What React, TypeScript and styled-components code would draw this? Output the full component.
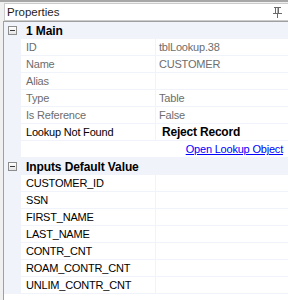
import React, { FC } from "react";
import styled, { createGlobalStyle } from "styled-components";

const GlobalStyle = createGlobalStyle`
    html, body {
        margin: 0;
        padding: 0;
        background: #f0f0f0;
    }
    body {
        font-family: "Liberation Sans", Arial, sans-serif;
        font-size: 11px;
        letter-spacing: -0.2px;
    }
`;

const Panel = styled.div`
    width: 288px;
    height: 300px;
    display: flex;
    flex-direction: column;
    border-top: 2px solid #a7a7a7;
    padding: 1px 0 0 3px;
    box-sizing: border-box;
    overflow: hidden;
`;

const TitleBar = styled.div`
    display: flex;
    align-items: center;
    justify-content: space-between;
    height: 16px;
    margin-left: 1px;
    padding: 0 6px 0 2px;
    background: #ffffff;
    border: 1px solid #cbcbcb;
    border-right: none;
    font-size: 11.5px;
    letter-spacing: 0;
    color: #1e1e1e;
`;

const Grid = styled.div`
    flex: 1;
    background: #ffffff;
    border-left: 1px solid #a0a0a0;
    border-top: 1px solid #a0a0a0;
`;

const CategoryRow = styled.div`
    display: flex;
    align-items: center;
    height: 15px;
    padding: 1px 0 0 4px;
    background: #f0f3f9;
    border-bottom: 1px solid #f0f3f9;
    font-weight: bold;
    font-size: 12px;
    letter-spacing: -0.1px;
    color: #000000;
`;

const ExpandBox = styled.span`
    position: relative;
    width: 9px;
    height: 9px;
    box-sizing: border-box;
    border: 1px solid #8d8d8d;
    background: linear-gradient(#ffffff, #e4e4e4);
    margin-right: 9px;

    &::after {
        content: "";
        position: absolute;
        left: 1px;
        right: 1px;
        top: 3px;
        height: 1px;
        background: #3b3b3b;
    }
`;

const PropRow = styled.div`
    display: flex;
    height: 16px;
    border-bottom: 1px solid #f0f3f9;
`;

const Margin = styled.div`
    width: 17px;
    flex-shrink: 0;
    background: #f0f3f9;
`;

const NameCell = styled.div<{ $muted?: boolean }>`
    width: 129px;
    padding-left: 5px;
    flex-shrink: 0;
    display: flex;
    align-items: center;
    border-right: 1px solid #f0f3f9;
    color: ${(p) => (p.$muted ? "#6d6d6d" : "#000000")};
    white-space: nowrap;
`;

const ValueCell = styled.div<{ $muted?: boolean; $bold?: boolean }>`
    flex: 1;
    display: flex;
    align-items: center;
    padding-left: ${(p) => (p.$bold ? "6px" : "3px")};
    color: ${(p) => (p.$muted ? "#6d6d6d" : "#000000")};
    font-weight: ${(p) => (p.$bold ? "bold" : "normal")};
    font-size: ${(p) => (p.$bold ? "12px" : "11px")};
    white-space: nowrap;
`;

const LinkCell = styled.div`
    flex: 1;
    display: flex;
    align-items: center;
    justify-content: flex-end;
    padding-right: 5px;
`;

const Link = styled.a`
    color: #0000ff;
    text-decoration: underline;
    cursor: pointer;
`;

const PinIcon: FC = () => (
    <svg width="9" height="11" viewBox="0 0 9 11">
        <g fill="none" stroke="#6a6a6a" strokeWidth="1">
            <line x1="1" y1="0.5" x2="8" y2="0.5" />
            <rect x="2.5" y="0.5" width="3" height="6" />
            <line x1="0" y1="6.5" x2="9" y2="6.5" />
            <line x1="4.5" y1="7" x2="4.5" y2="11" />
        </g>
        <line x1="5" y1="1" x2="5" y2="6" stroke="#6a6a6a" />
    </svg>
);

type Prop = { name: string; value?: string; muted?: boolean; bold?: boolean };

const mainProps: Prop[] = [
    { name: "ID", value: "tblLookup.38", muted: true },
    { name: "Name", value: "CUSTOMER", muted: true },
    { name: "Alias", value: "", muted: true },
    { name: "Type", value: "Table", muted: true },
    { name: "Is Reference", value: "False", muted: true },
    { name: "Lookup Not Found", value: "Reject Record", bold: true },
];

const inputs = [
    "CUSTOMER_ID",
    "SSN",
    "FIRST_NAME",
    "LAST_NAME",
    "CONTR_CNT",
    "ROAM_CONTR_CNT",
    "UNLIM_CONTR_CNT",
];

const Category: FC<{ title: string }> = ({ title }) => (
    <CategoryRow>
        <ExpandBox />
        {title}
    </CategoryRow>
);

const App: FC = () => (
    <>
        <GlobalStyle />
        <Panel>
            <TitleBar>
                <span>Properties</span>
                <PinIcon />
            </TitleBar>
            <Grid>
                <Category title="1 Main" />
                {mainProps.map((p) => (
                    <PropRow key={p.name}>
                        <Margin />
                        <NameCell $muted={p.muted}>{p.name}</NameCell>
                        <ValueCell $muted={p.muted} $bold={p.bold}>
                            {p.value}
                        </ValueCell>
                    </PropRow>
                ))}
                <PropRow>
                    <Margin />
                    <LinkCell>
                        <Link>Open Lookup Object</Link>
                    </LinkCell>
                </PropRow>
                <Category title="Inputs Default Value" />
                {inputs.map((name) => (
                    <PropRow key={name}>
                        <Margin />
                        <NameCell>{name}</NameCell>
                        <ValueCell />
                    </PropRow>
                ))}
            </Grid>
        </Panel>
    </>
);

export default App;
